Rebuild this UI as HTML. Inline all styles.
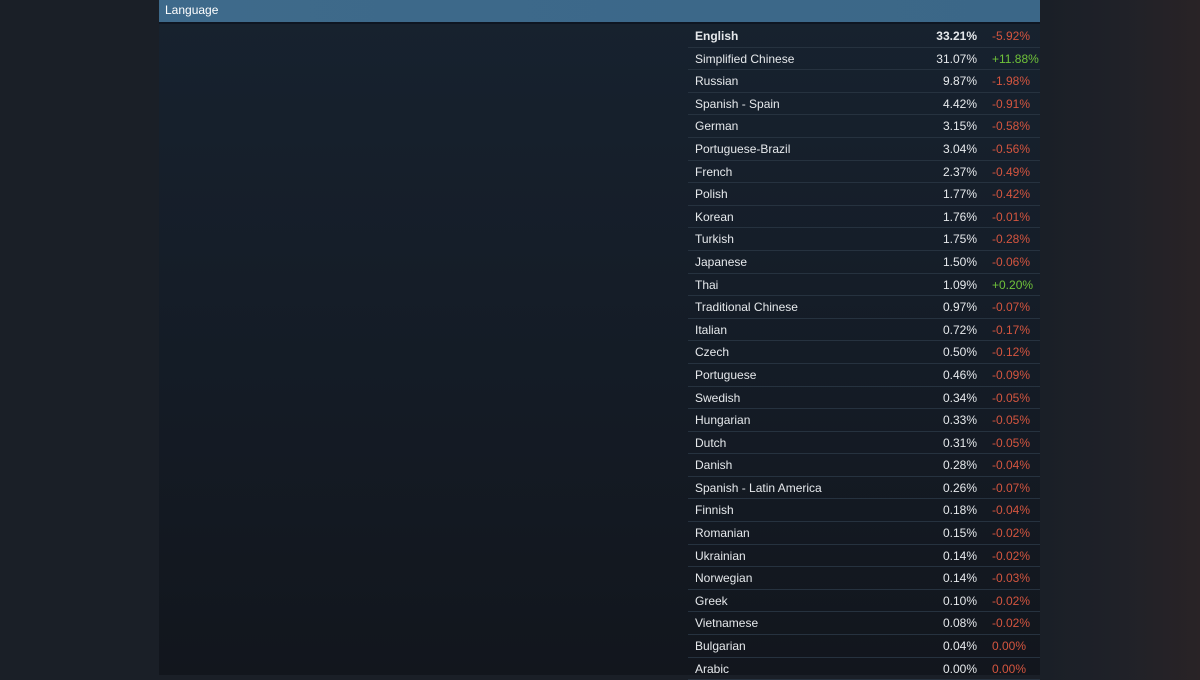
<!DOCTYPE html>
<html><head><meta charset="utf-8"><style>
html,body{margin:0;padding:0;}
body{width:1200px;height:675px;overflow:hidden;position:relative;font-family:"Liberation Sans",Arial,sans-serif;
background:linear-gradient(90deg,#1a1f27 0%,#1a1f27 87%,#1f2128 93%,#292326 100%);}
.panel{position:absolute;left:159px;top:0;width:881px;height:675px;background:linear-gradient(180deg,#17222f 0%,#141b25 60%,#12161d 100%);}
.hdr{position:absolute;left:159px;top:0;width:881px;height:22px;background:linear-gradient(90deg,#3e6a8b,#3b6788);border-bottom:2px solid #0e1622;}
.hdr span{position:absolute;left:6px;top:3px;color:#fff;font-size:12px;}
.tbl{position:absolute;left:688px;top:25px;width:352px;}
.row{height:21.6px;border-bottom:1px solid #26323f;position:relative;font-size:12px;color:#e6e9ec;}
.row span{position:absolute;top:4px;}
.n{left:7px}
.p{right:63px;text-align:right}
.c{left:304px;color:#d4553f;font-weight:normal}
.g{color:#6fc23a}
.b .n,.b .p{font-weight:bold}
</style></head><body>
<div class="panel"></div>
<div class="hdr"><span>Language</span></div>
<div class="tbl">
<div class="row b"><span class="n">English</span><span class="p">33.21%</span><span class="c">-5.92%</span></div>
<div class="row"><span class="n">Simplified Chinese</span><span class="p">31.07%</span><span class="c g">+11.88%</span></div>
<div class="row"><span class="n">Russian</span><span class="p">9.87%</span><span class="c">-1.98%</span></div>
<div class="row"><span class="n">Spanish - Spain</span><span class="p">4.42%</span><span class="c">-0.91%</span></div>
<div class="row"><span class="n">German</span><span class="p">3.15%</span><span class="c">-0.58%</span></div>
<div class="row"><span class="n">Portuguese-Brazil</span><span class="p">3.04%</span><span class="c">-0.56%</span></div>
<div class="row"><span class="n">French</span><span class="p">2.37%</span><span class="c">-0.49%</span></div>
<div class="row"><span class="n">Polish</span><span class="p">1.77%</span><span class="c">-0.42%</span></div>
<div class="row"><span class="n">Korean</span><span class="p">1.76%</span><span class="c">-0.01%</span></div>
<div class="row"><span class="n">Turkish</span><span class="p">1.75%</span><span class="c">-0.28%</span></div>
<div class="row"><span class="n">Japanese</span><span class="p">1.50%</span><span class="c">-0.06%</span></div>
<div class="row"><span class="n">Thai</span><span class="p">1.09%</span><span class="c g">+0.20%</span></div>
<div class="row"><span class="n">Traditional Chinese</span><span class="p">0.97%</span><span class="c">-0.07%</span></div>
<div class="row"><span class="n">Italian</span><span class="p">0.72%</span><span class="c">-0.17%</span></div>
<div class="row"><span class="n">Czech</span><span class="p">0.50%</span><span class="c">-0.12%</span></div>
<div class="row"><span class="n">Portuguese</span><span class="p">0.46%</span><span class="c">-0.09%</span></div>
<div class="row"><span class="n">Swedish</span><span class="p">0.34%</span><span class="c">-0.05%</span></div>
<div class="row"><span class="n">Hungarian</span><span class="p">0.33%</span><span class="c">-0.05%</span></div>
<div class="row"><span class="n">Dutch</span><span class="p">0.31%</span><span class="c">-0.05%</span></div>
<div class="row"><span class="n">Danish</span><span class="p">0.28%</span><span class="c">-0.04%</span></div>
<div class="row"><span class="n">Spanish - Latin America</span><span class="p">0.26%</span><span class="c">-0.07%</span></div>
<div class="row"><span class="n">Finnish</span><span class="p">0.18%</span><span class="c">-0.04%</span></div>
<div class="row"><span class="n">Romanian</span><span class="p">0.15%</span><span class="c">-0.02%</span></div>
<div class="row"><span class="n">Ukrainian</span><span class="p">0.14%</span><span class="c">-0.02%</span></div>
<div class="row"><span class="n">Norwegian</span><span class="p">0.14%</span><span class="c">-0.03%</span></div>
<div class="row"><span class="n">Greek</span><span class="p">0.10%</span><span class="c">-0.02%</span></div>
<div class="row"><span class="n">Vietnamese</span><span class="p">0.08%</span><span class="c">-0.02%</span></div>
<div class="row"><span class="n">Bulgarian</span><span class="p">0.04%</span><span class="c">0.00%</span></div>
<div class="row"><span class="n">Arabic</span><span class="p">0.00%</span><span class="c">0.00%</span></div>
</div>
</body></html>
